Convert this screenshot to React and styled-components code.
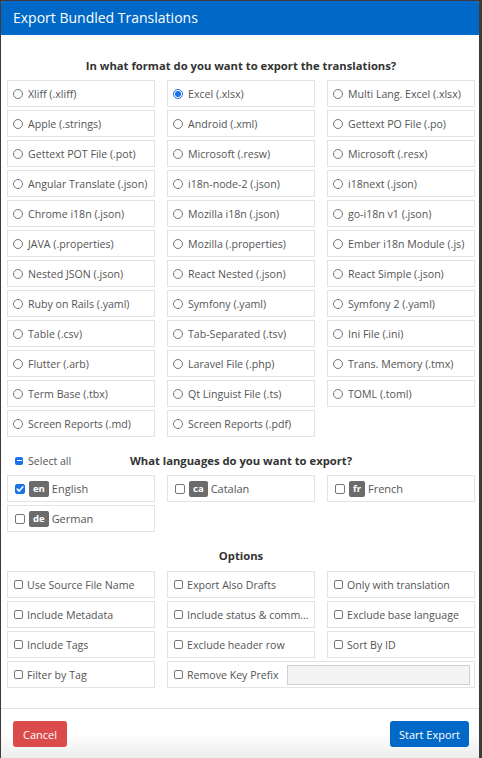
import React from "react";
import styled, { createGlobalStyle } from "styled-components";

const Global = createGlobalStyle`
  html, body { margin: 0; padding: 0; background: #3c3c3c; }
  body { font-family: "Open Sans", "Liberation Sans", sans-serif; }
  * { box-sizing: border-box; }
`;

const Modal = styled.div`
  margin: 1px 3px 0 1px;
  width: 478px;
  height: 757px;
  background: #fff;
  border-radius: 4px 4px 0 0;
  overflow: hidden;
  display: flex;
  flex-direction: column;
`;

const Header = styled.div`
  height: 34px;
  background: #0069c7;
  color: #fff;
  font-size: 14px;
  line-height: 34px;
  padding-left: 12px;
  flex-shrink: 0;
`;

const Body = styled.div`
  padding: 0 4px 0 6px;
  flex: 1;
`;

const SectionTitle = styled.div`
  font-size: 11.25px;
  font-weight: 700;
  color: #333;
  text-align: center;
  line-height: 17px;
  margin-top: ${(p) => p.$mt}px;
  margin-bottom: ${(p) => p.$mb}px;
`;

const Grid = styled.div`
  display: grid;
  grid-template-columns: repeat(3, 148px);
  column-gap: 12px;
  row-gap: 3px;
`;

const Item = styled.div`
  height: 27px;
  border: 1px solid #e3e3e3;
  display: flex;
  align-items: center;
  padding-left: 5px;
  font-size: 10.6px;
  color: #555;
  white-space: nowrap;
  overflow: hidden;
  grid-column: ${(p) => (p.$span ? `span ${p.$span}` : "auto")};
  gap: ${(p) => p.$gap || 5}px;
`;

const Radio = styled.span`
  width: 10px;
  height: 10px;
  border-radius: 50%;
  border: 1px solid ${(p) => (p.$on ? "#1a73e8" : "#777")};
  flex-shrink: 0;
  display: flex;
  align-items: center;
  justify-content: center;
  &::after {
    content: "";
    width: 6px;
    height: 6px;
    border-radius: 50%;
    background: ${(p) => (p.$on ? "#1a73e8" : "transparent")};
  }
`;

const Check = styled.span`
  width: ${(p) => p.$size}px;
  height: ${(p) => p.$size}px;
  border-radius: 2px;
  border: 1px solid ${(p) => (p.$on ? "#1a73e8" : "#777")};
  background: ${(p) => (p.$on ? "#1a73e8" : "#fff")};
  flex-shrink: 0;
  display: flex;
  align-items: center;
  justify-content: center;
  margin-left: ${(p) => p.$ml || 0}px;
`;

const LangRow = styled.div`
  position: relative;
  margin-top: 15px;
  margin-bottom: 6px;
`;

const SelectAll = styled.div`
  position: absolute;
  left: 8px;
  top: 0;
  height: 17px;
  display: flex;
  align-items: center;
  gap: 5px;
  font-size: 10.6px;
  color: #555;
`;

const Minus = styled.span`
  width: 8px;
  height: 8px;
  border-radius: 2px;
  background: #1a73e8;
  display: flex;
  align-items: center;
  justify-content: center;
  &::after {
    content: "";
    width: 5px;
    height: 1.5px;
    background: #fff;
  }
`;

const Badge = styled.span`
  background: #6b6b6b;
  color: #fff;
  font-weight: 700;
  font-size: 9.5px;
  height: 16px;
  line-height: 16px;
  padding: 0 4px;
  border-radius: 2px;
  margin-right: -1px;
`;

const LangItem = styled(Item)`
  font-size: 11px;
  padding-left: 6px;
`;

const PrefixInput = styled.span`
  flex: 1;
  height: 20px;
  margin-right: 4px;
  margin-left: 4px;
  background: #f4f4f4;
  border: 1px solid #d0d0d0;
`;

const Footer = styled.div`
  border-top: 1px solid #e2e2e2;
  height: 50px;
  padding: 12px 10px 0 12px;
  display: flex;
  justify-content: space-between;
  align-items: flex-start;
  background: linear-gradient(to bottom, #fff 0px, #fff 24px, #ececec 50px);
  flex-shrink: 0;
`;

const Button = styled.button`
  height: 26px;
  border: none;
  border-radius: 3px;
  color: #fff;
  font-family: inherit;
  font-size: 11px;
  padding: 0 ${(p) => (p.$danger ? 10 : 9)}px;
  background: ${(p) => (p.$danger ? "#dc4b4b" : "#0069c7")};
`;

const formats = [
  "Xliff (.xliff)", "Excel (.xlsx)", "Multi Lang. Excel (.xlsx)",
  "Apple (.strings)", "Android (.xml)", "Gettext PO File (.po)",
  "Gettext POT File (.pot)", "Microsoft (.resw)", "Microsoft (.resx)",
  "Angular Translate (.json)", "i18n-node-2 (.json)", "i18next (.json)",
  "Chrome i18n (.json)", "Mozilla i18n (.json)", "go-i18n v1 (.json)",
  "JAVA (.properties)", "Mozilla (.properties)", "Ember i18n Module (.js)",
  "Nested JSON (.json)", "React Nested (.json)", "React Simple (.json)",
  "Ruby on Rails (.yaml)", "Symfony (.yaml)", "Symfony 2 (.yaml)",
  "Table (.csv)", "Tab-Separated (.tsv)", "Ini File (.ini)",
  "Flutter (.arb)", "Laravel File (.php)", "Trans. Memory (.tmx)",
  "Term Base (.tbx)", "Qt Linguist File (.ts)", "TOML (.toml)",
  "Screen Reports (.md)", "Screen Reports (.pdf)",
];

const langs = [
  { code: "en", name: "English", on: true },
  { code: "ca", name: "Catalan" },
  { code: "fr", name: "French" },
  { code: "de", name: "German" },
];

const options = [
  "Use Source File Name", "Export Also Drafts", "Only with translation",
  "Include Metadata", "Include status & comm...", "Exclude base language",
  "Include Tags", "Exclude header row", "Sort By ID",
  "Filter by Tag",
];

const Tick = () => (
  <svg width="8" height="8" viewBox="0 0 10 10">
    <path d="M1.6 5.2 L4 7.6 L8.6 2.2" fill="none" stroke="#fff" strokeWidth="2" strokeLinecap="round" strokeLinejoin="round" />
  </svg>
);

export default function App() {
  return (
    <>
      <Global />
      <Modal>
        <Header>Export Bundled Translations</Header>
        <Body>
          <SectionTitle $mt={22} $mb={6}>In what format do you want to export the translations?</SectionTitle>
          <Grid>
            {formats.map((f) => (
              <Item key={f}>
                <Radio $on={f === "Excel (.xlsx)"} />
                {f}
              </Item>
            ))}
          </Grid>
          <LangRow>
            <SelectAll>
              <Minus />
              Select all
            </SelectAll>
            <SectionTitle $mt={0} $mb={0}>What languages do you want to export?</SectionTitle>
          </LangRow>
          <Grid>
            {langs.map((l) => (
              <LangItem key={l.code} $gap={4}>
                <Check $size={10} $ml={1} $on={l.on}>{l.on && <Tick />}</Check>
                <Badge>{l.code}</Badge>
                {l.name}
              </LangItem>
            ))}
          </Grid>
          <SectionTitle $mt={15} $mb={7}>Options</SectionTitle>
          <Grid>
            {options.map((o) => (
              <Item key={o} $gap={4}>
                <Check $size={9} $ml={1} />
                {o}
              </Item>
            ))}
            <Item $span={2} $gap={4}>
              <Check $size={9} $ml={1} />
              Remove Key Prefix
              <PrefixInput />
            </Item>
          </Grid>
        </Body>
        <Footer>
          <Button $danger>Cancel</Button>
          <Button>Start Export</Button>
        </Footer>
      </Modal>
    </>
  );
}
